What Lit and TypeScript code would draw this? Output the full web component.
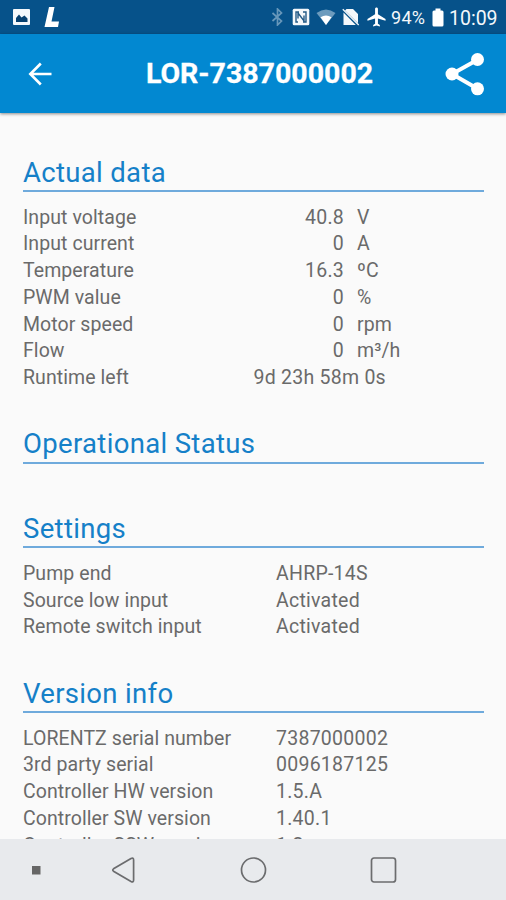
import { LitElement, html, css, svg } from "lit";
import { customElement, property } from "lit/decorators.js";

interface Row {
  label: string;
  value: string;
  unit?: string;
  kind?: "measure" | "duration";
}

interface Section {
  title: string;
  rows: Row[];
}

const measure = (label: string, value: string, unit: string): Row => ({ label, value, unit, kind: "measure" });

const SECTIONS: Section[] = [
  {
    title: "Actual data",
    rows: [
      measure("Input voltage", "40.8", "V"),
      measure("Input current", "0", "A"),
      measure("Temperature", "16.3", "ºC"),
      measure("PWM value", "0", "%"),
      measure("Motor speed", "0", "rpm"),
      measure("Flow", "0", "m³/h"),
      { label: "Runtime left", value: "9d 23h 58m 0s", kind: "duration" },
    ],
  },
  { title: "Operational Status", rows: [] },
  {
    title: "Settings",
    rows: [
      { label: "Pump end", value: "AHRP-14S" },
      { label: "Source low input", value: "Activated" },
      { label: "Remote switch input", value: "Activated" },
    ],
  },
  {
    title: "Version info",
    rows: [
      { label: "LORENTZ serial number", value: "7387000002" },
      { label: "3rd party serial", value: "0096187125" },
      { label: "Controller HW version", value: "1.5.A" },
      { label: "Controller SW version", value: "1.40.1" },
      { label: "Controller SSW version", value: "1.2" },
    ],
  },
];

@customElement("status-bar")
class StatusBar extends LitElement {
  static styles = css`
    :host {
      display: flex;
      align-items: center;
      height: 34px;
      padding: 0 8px 0 12px;
      box-sizing: border-box;
      background: #06528a;
      color: #f4f8fb;
      font-size: 18px;
      line-height: 34px;
    }
    svg { display: block; flex: none; }
    .logo { margin-left: 13px; }
    .spacer { flex: 1; }
    .nfc { margin-left: 8px; }
    .wifi { margin-left: 6px; }
    .sim { margin-left: 6px; }
    .plane { margin-left: 7px; }
    .percent { margin-left: 5px; width: 37px; letter-spacing: 0.3px; padding-top: 2px; }
    .battery { margin-left: 4px; }
    .time { margin-left: 5px; width: 49px; font-size: 19.5px; padding-top: 3px; white-space: nowrap; }
  `;
  render() {
    return html`
      <svg width="19" height="18" viewBox="0 0 19 18">
        <rect x="1" y="1" width="17" height="16" rx="1" fill="#f4f8fb" />
        <path d="M4 14V10L7 6.5L9.5 9.5L12.5 7.5L15.5 10.5V14Z" fill="#06406f" />
      </svg>
      <svg class="logo" width="16" height="22" viewBox="0 0 16 22">
        <path d="M5 1H10.5L7.5 15.5H15L14 21H0.5Z" fill="#fff" />
      </svg>
      <span class="spacer"></span>
      <svg width="13" height="18" viewBox="0 0 13 18">
        <path d="M1.5 5L10.5 13L6.5 17V1L10.5 5L1.5 13" fill="none" stroke="#6797ba" stroke-width="1.7" />
      </svg>
      <svg class="nfc" width="18" height="18" viewBox="0 0 18 18">
        <rect x=".7" y=".7" width="16.6" height="16.6" rx="1.5" fill="#f4f8fb" />
        <path d="M7 4H4V14H6M6 4V10.500M6 5L12 13V7.500M11 4H14V14H11" fill="none" stroke="#245b87" stroke-width="1.4" />
      </svg>
      <svg class="wifi" width="20" height="18" viewBox="0 0 20 18">
        <path d="M0.5 5Q10-2 19.5 5L10 17Z" fill="#6c9bbd" />
        <path d="M4.5 9.2Q10 6 15.5 9.2L10 17Z" fill="#fff" />
      </svg>
      <svg class="sim" width="18" height="18" viewBox="0 0 18 18">
        <path d="M4.5 1H11L16 6V15.3L3 2.5ZM1.5 4.4L13.8 17H1.5Z" fill="#f4f8fb" />
        <path d="M0.8 1.2L16.7 17" stroke="#f4f8fb" stroke-width="1.3" />
      </svg>
      <svg class="plane" width="19" height="20" viewBox="2 1.5 19 21">
        <path d="M21 16v-2l-8-5V3.5c0-.83-.67-1.5-1.5-1.5S10 2.670 10 3.500V9l-8 5v2l8-2.500V19l-2 1.500V22l3.500-1 3.500 1v-1.500L13 19v-5.500l8 2.500z" fill="#fff" />
      </svg>
      <span class="percent">94%</span>
      <svg class="battery" width="12" height="19" viewBox="0 0 12 19">
        <path d="M3.500.5h5v2H10q1.500 0 1.500 1.500v13q0 1.500-1.500 1.500H2Q.5 18.500.5 17V4Q.5 2.500 2 2.500h1.500Z" fill="#fff" />
      </svg>
      <span class="time">10:09</span>
    `;
  }
}

@customElement("title-bar")
class TitleBar extends LitElement {
  static styles = css`
    :host {
      display: grid;
      grid-template-columns: 80px 1fr 67px;
      align-items: center;
      height: 79px;
      background: #0288d1;
      color: #fff;
      box-shadow: 0 1px 3px rgba(0, 0, 0, 0.45);
      z-index: 1;
    }
    svg { display: block; }
    .back { margin-left: 28px; }
    .share { margin-left: 5px; }
    h1 {
      margin: 0;
      text-align: center;
      font-size: 28.500px;
      font-weight: 700;
      line-height: 36px;
      white-space: nowrap;
      -webkit-text-stroke: 0.300px #fff;
    }
  `;
  @property() heading = "";
  render() {
    return html`
      <svg class="back" width="24" height="24" viewBox="0 0 24 24">
        <path d="M23.500 12H2.500M12.800 1.500L2.300 12L12.800 22.500" fill="none" stroke="#fff" stroke-width="2.600" />
      </svg>
      <h1>${this.heading}</h1>
      <svg class="share" width="41" height="44" viewBox="0 0 41 44">
        <path d="M34 7.500L8 22L34 37" fill="none" stroke="#fff" stroke-width="4" />
        <circle cx="33.500" cy="7.500" r="6.500" fill="#fff" />
        <circle cx="8" cy="22" r="6.500" fill="#fff" />
        <circle cx="33.500" cy="36.800" r="6.500" fill="#fff" />
      </svg>
    `;
  }
}

@customElement("data-section")
class DataSection extends LitElement {
  static styles = css`
    :host { display: block; padding: 0 22px 0 23px; }
    h2 {
      margin: 0;
      height: 72px;
      box-sizing: border-box;
      padding-top: 35.500px;
      border-bottom: 2px solid #6faadc;
      font-size: 27.500px;
      font-weight: 400;
      line-height: 34px;
      letter-spacing: 0.330px;
      color: #1580c8;
    }
    .rows { padding-top: 12.500px; }
    .row {
      display: grid;
      grid-template-columns: 253px 1fr;
      height: 26.750px;
      line-height: 26.750px;
      font-size: 19.500px;
      letter-spacing: 0.070px;
      color: #6a6a6a;
      white-space: nowrap;
    }
    .value { letter-spacing: 0.250px; }
    .measure { grid-template-columns: 230px 91px 1fr; }
    .measure .value { text-align: right; }
    .unit { padding-left: 13px; }
    .duration { grid-template-columns: 230.500px 1fr; }
  `;
  @property({ attribute: false }) section!: Section;
  render() {
    return html`
      <h2>${this.section.title}</h2>
      <div class="rows">
        ${this.section.rows.map(
          (r) => html`<div class="row ${r.kind ?? ""}">
            <span>${r.label}</span><span class="value">${r.value}</span>${r.unit ? html`<span class="unit">${r.unit}</span>` : null}
          </div>`
        )}
      </div>
    `;
  }
}

@customElement("nav-bar")
class NavBar extends LitElement {
  static styles = css`
    :host {
      display: grid;
      grid-template-columns: 72px 104px 156px 104px 70px;
      align-items: center;
      justify-items: center;
      height: 61px;
      background: #e8eaed;
    }
    svg { display: block; }
  `;
  private icon(shape: unknown) {
    return html`<svg width="30" height="30" viewBox="0 0 30 30" fill="none" stroke="#6b6c6e" stroke-width="1.700">${shape}</svg>`;
  }
  render() {
    return html`
      ${this.icon(svg`<rect x="11" y="11" width="8.500" height="8.500" fill="#666" stroke="none" />`)}
      ${this.icon(svg`<path d="M4.500 16.200Q3 15 4.500 13.800L22 3.500Q24.600 2.200 24.600 5V25Q24.600 27.800 22 26.500Z" />`)}
      ${this.icon(svg`<circle cx="14.500" cy="15" r="12" />`)}
      ${this.icon(svg`<rect x="2.500" y="3" width="24" height="24" rx="2.500" />`)}
    `;
  }
}

@customElement("app-root")
class AppRoot extends LitElement {
  static styles = css`
    :host {
      display: flex;
      flex-direction: column;
      height: 900px;
      overflow: hidden;
      background: #fafafa;
      font-family: Roboto, "Liberation Sans", sans-serif;
    }
    main { flex: 1; min-height: 0; overflow: hidden; padding-top: 7px; }
    status-bar, title-bar, nav-bar { flex: none; }
  `;
  render() {
    return html`
      <status-bar></status-bar>
      <title-bar heading="LOR-7387000002"></title-bar>
      <main>${SECTIONS.map((s) => html`<data-section .section=${s}></data-section>`)}</main>
      <nav-bar></nav-bar>
    `;
  }
}
